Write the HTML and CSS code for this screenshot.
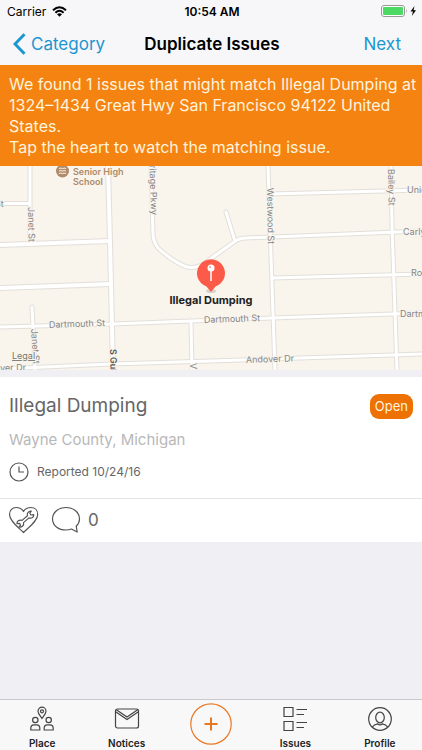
FILE: index.html
```
<!DOCTYPE html>
<html lang="en">
<head>
  <meta charset="UTF-8">
  <meta name="viewport" content="width=device-width, initial-scale=1.0">
  <title>Duplicate Issues</title>
  <link rel="stylesheet" href="styles.css">
</head>
<body>

<header>
  <div class="status-bar">
    <div class="carrier">
      <span>Carrier</span>
      <svg width="15" height="11" viewBox="0 0 15 11" fill="none" stroke="#000" stroke-width="2">
        <path d="M1 4.200Q7.500 -1.800 14 4.200"/>
        <path d="M3.400 6.700Q7.500 2.900 11.600 6.700"/>
        <path d="M7.500 10.800L5 8.200Q7.500 6.200 10 8.200Z" fill="#000" stroke="none"/>
      </svg>
    </div>
    <div class="time">10:54 AM</div>
    <div class="battery">
      <svg width="36" height="12" viewBox="0 0 36 12">
        <rect x="0.500" y="0.500" width="23" height="11" rx="2.500" fill="#fff" stroke="#999"/>
        <rect x="2" y="2" width="20" height="8" rx="1" fill="#4cd964"/>
        <path d="M25 4Q26.500 6 25 8Z" fill="#999"/>
        <path d="M33.500 1L29.500 6.600H32L30.800 11L35 5.200H32.500Z" fill="#000"/>
      </svg>
    </div>
  </div>
  <nav class="nav-bar">
    <a class="back" href="#category">
      <svg width="13" height="22" viewBox="0 0 13 22" fill="none" stroke="#1c96d0" stroke-width="3">
        <path d="M11.500 1.200L2 11L11.500 20.800"/>
      </svg>
      Category
    </a>
    <h1>Duplicate Issues</h1>
    <a class="next" href="#next">Next</a>
  </nav>
</header>

<div class="banner">
  <p>We found 1 issues that might match Illegal Dumping at 1324–1434 Great Hwy San Francisco 94122 United States.</p>
  <p>Tap the heart to watch the matching issue.</p>
</div>

<svg class="map" viewBox="0 0 422 204" preserveAspectRatio="xMidYMid slice">
  <defs>
    <g id="streets">
      <path d="M30 0V72M5 37.500H30M32 141L35 204"/>
      <path d="M151 0L153 68Q153 75 158 82C170 93 178 98 187 101C198 103 205 98 213 91L234 76Q239 72 246 72L422 65"/>
      <path d="M226 46L235 75"/>
      <path d="M268 0L271 90L275 204"/>
      <path d="M391 0L392 60L397 204"/>
      <path d="M270 28L422 24"/>
      <path d="M272 112L422 108"/>
      <path d="M0 161L113 158L272 152L422 147"/>
      <path d="M0 203L111 198L211 195L422 188"/>
      <path d="M191 156L192 204"/>
    </g>
    <g id="avenues">
      <path d="M108 0L110 76L113 204"/>
      <path d="M0 79L110 75"/>
      <path d="M0 122L111 118"/>
    </g>
  </defs>
  <rect width="422" height="204" fill="#f9f5ed"/>
  <use href="#streets" class="road-edge"/>
  <use href="#avenues" class="road-edge wide"/>
  <use href="#streets" class="road"/>
  <use href="#avenues" class="road wide"/>

  <g class="school">
    <circle cx="62.500" cy="5" r="6.500"/>
    <path d="M59 2.500Q61 1.500 62.500 2.700Q64 1.500 66 2.500M59 5Q61 4 62.500 5.200Q64 4 66 5M59 7.500Q61 6.500 62.500 7.700Q64 6.500 66 7.500"/>
    <text x="73" y="9">Senior High</text>
    <text x="73" y="19">School</text>
  </g>

  <g class="labels">
    <text x="-5" y="41">St</text>
    <text transform="translate(28 41) rotate(89)">Janet St</text>
    <text transform="translate(149 -13) rotate(88)">Heritage Pkwy</text>
    <text transform="translate(267 22) rotate(89)">Westwood St</text>
    <text transform="translate(388 3) rotate(89)">Bailey St</text>
    <text x="407" y="27">Union St</text>
    <text x="403" y="69">Carlyle St</text>
    <text x="411" y="110">Rosetta</text>
    <text transform="translate(49 162) rotate(-2)">Dartmouth St</text>
    <text transform="translate(204 157) rotate(-2)">Dartmouth St</text>
    <text x="400" y="151">Dartmouth St</text>
    <text transform="translate(246 197) rotate(-2)">Andover Dr</text>
    <text transform="translate(-22 206) rotate(-2)">Andover Dr</text>
    <text transform="translate(31 163) rotate(86)">Janet St</text>
    <text transform="translate(190 197) rotate(90)">Virgil St</text>
    <text class="major" transform="translate(110 183) rotate(89)">S Gulley Rd</text>
  </g>
  <text class="legal" x="12" y="193">Legal</text>

  <g class="pin">
    <ellipse cx="211" cy="125" rx="5" ry="2" fill="#d8d3cb"/>
    <path d="M211 126L206.500 120.500A14 14 0 1 1 215.500 120.500Z" fill="#fc5b49"/>
    <circle cx="211" cy="102" r="3.500" fill="#fff"/>
    <path d="M211 104V115" stroke="#fff" stroke-width="1.500"/>
    <circle cx="210" cy="101" r="1" fill="#fc9b8f"/>
    <text x="211" y="138">Illegal Dumping</text>
  </g>
</svg>

<main class="card">
  <div class="details">
    <div class="title-row">
      <h2>Illegal Dumping</h2>
      <span class="badge">Open</span>
    </div>
    <p class="place">Wayne County, Michigan</p>
    <p class="reported">
      <svg width="20" height="20" viewBox="0 0 20 20" fill="none" stroke="#555" stroke-width="1.200">
        <circle cx="10" cy="10" r="9"/>
        <path d="M10 4.500V10H15"/>
      </svg>
      Reported 10/24/16
    </p>
  </div>
  <div class="actions">
    <button aria-label="Watch issue">
      <svg width="32" height="28" viewBox="0 0 32 28" fill="none" stroke="#555" stroke-width="1.200" stroke-linejoin="round">
        <path d="M15.500 26.500C10 21 1.500 15 1.500 8.500C1.500 4 4.500 1.500 8.200 1.500C11.500 1.500 14 3 15.500 5.500C17 3 19.500 1.500 22.800 1.500C27 1.500 29.700 4.500 29.700 8.500C29.700 15 21 21 15.500 26.500Z"/>
        <path d="M14 14.400L19.500 9.700C18.500 7.500 20.300 4.900 23.300 5.200L21.800 7.200L22.900 9L25.700 8.600C26 11 23.800 12.900 21 11.900L15.500 16.600C16.300 19.200 14 21.600 11 21L12.600 19.200L11.600 17.300L9 17.700C8.600 15.300 11 13.400 14 14.400Z"/>
      </svg>
    </button>
    <button aria-label="Comments">
      <svg width="30" height="28" viewBox="0 0 30 28" fill="none" stroke="#555" stroke-width="1.200" stroke-linejoin="round">
        <path d="M25.200 20.200C27.500 18 28.500 15.600 28.500 13C28.500 6.500 22.500 1.500 15 1.500S1.500 6.500 1.500 13S7.500 24 15 24C17 24 19 23.600 20.500 23L26.200 26Z"/>
      </svg>
      <span>0</span>
    </button>
  </div>
</main>

<nav class="tab-bar">
  <a href="#place">
    <svg width="26" height="26" viewBox="0 0 26 26" fill="none" stroke="#444" stroke-width="1.200">
      <path d="M13 12.500C11 9.500 9 7.500 9 5.200A4 4 0 0 1 17 5.200C17 7.500 15 9.500 13 12.500Z"/>
      <circle cx="13" cy="5.300" r="1.500"/>
      <circle cx="6.300" cy="14" r="2.700"/>
      <circle cx="19.700" cy="14" r="2.700"/>
      <path d="M1.800 24V22Q1.800 18.800 5 18.800H7.600Q10.800 18.800 10.800 22V24ZM15.200 24V22Q15.200 18.800 18.400 18.800H21Q24.200 18.800 24.200 22V24Z"/>
    </svg>
    Place
  </a>
  <a href="#notices">
    <svg width="26" height="26" viewBox="0 0 26 26" fill="none" stroke="#444" stroke-width="1.200">
      <rect x="1.500" y="3" width="23" height="19" rx="2"/>
      <path d="M2 3.500L13 11L24 3.500M2 6L13 13.500L24 6"/>
    </svg>
    Notices
  </a>
  <a class="add" href="#new" aria-label="New issue">
    <svg width="42" height="42" viewBox="0 0 42 42" fill="none" stroke="#e87722">
      <circle cx="21" cy="21" r="20.200" stroke-width="1.200"/>
      <path d="M14.500 21H27.500M21 14.500V27.500" stroke-width="2"/>
    </svg>
  </a>
  <a href="#issues">
    <svg width="26" height="26" viewBox="0 0 26 26" fill="none" stroke="#444" stroke-width="1.200">
      <path d="M2 1.500H11V10.500H2ZM2 15.500H11V24.500H2Z"/>
      <path d="M14.500 3.500H25M14.500 8.500H22M14.500 16.500H25M14.500 21.500H22"/>
    </svg>
    Issues
  </a>
  <a href="#profile">
    <svg width="26" height="26" viewBox="0 0 26 26" fill="none" stroke="#444" stroke-width="1.200">
      <circle cx="13" cy="13" r="11.300"/>
      <ellipse cx="13" cy="11.500" rx="4.300" ry="5.300"/>
      <path d="M5.300 21Q7 18.500 10.500 17.800Q13 20 15.500 17.800Q19 18.500 20.700 21"/>
    </svg>
    Profile
  </a>
</nav>

</body>
</html>
```
FILE: styles.css
```
* {
  box-sizing: border-box;
}
body {
  margin: 0;
  min-height: 100vh;
  display: flex;
  flex-direction: column;
  font-family: Inter, "Liberation Sans", sans-serif;
  background-color: #efeff4;
  color: #000;
}
h1, h2, p {
  margin: 0;
  font-weight: normal;
}
a {
  text-decoration: none;
  color: #1c96d0;
}
svg {
  display: block;
  flex-shrink: 0;
}

/* Top bars */
header {
  background-color: #f7f7f9;
}
.status-bar {
  display: grid;
  grid-template-columns: 1fr auto 1fr;
  align-items: center;
  height: 22px;
  padding: 0 5px 0 7px;
  font-size: 12px;
}
.carrier {
  display: flex;
  align-items: center;
  gap: 6px;
}
.time {
  font-weight: 600;
}
.battery {
  justify-self: end;
}
.nav-bar {
  display: grid;
  grid-template-columns: 1fr auto 1fr;
  align-items: center;
  height: 43px;
  padding: 0 21px 0 13px;
  font-size: 17px;
}
.nav-bar h1 {
  padding-left: 10px;
  font-size: 17px;
  font-weight: 600;
}
.back {
  display: flex;
  align-items: center;
  gap: 5px;
}
.next {
  justify-self: end;
}

.banner {
  padding: 9px 2px 8px 9px;
  background-color: #f58311;
  color: #fff3dc;
  font-size: 16px;
  line-height: 21px;
}

/* Map */
.map {
  width: 100%;
  height: auto;
}
.road-edge {
  fill: none;
  stroke: #e2dfda;
  stroke-width: 5px;
  stroke-linecap: round;
}
.road {
  fill: none;
  stroke: #fff;
  stroke-width: 3px;
  stroke-linecap: round;
}
.road-edge.wide {
  stroke-width: 6px;
}
.road.wide {
  stroke-width: 4px;
}
.map text {
  paint-order: stroke;
  stroke: #f9f5ed;
  stroke-width: 2px;
}
.labels {
  font-size: 9px;
  fill: #85858a;
}
.labels .major {
  font-weight: 600;
  fill: #555;
}
.school {
  font-size: 9px;
  font-weight: 600;
  fill: #b08a69;
}
.school path {
  fill: none;
  stroke: #f9f5ed;
  stroke-width: 1px;
}
.legal {
  font-size: 9px;
  fill: #77756f;
  text-decoration: underline;
}
.pin text {
  font-size: 11px;
  font-weight: 700;
  text-anchor: middle;
  fill: #222;
}

/* Issue card */
.card {
  margin-top: 7px;
  background-color: #fff;
}
.details {
  padding: 16px 9px 16px;
}
.title-row {
  display: flex;
  align-items: center;
  justify-content: space-between;
}
.title-row h2 {
  font-size: 19px;
  line-height: 26px;
  color: #666;
}
.badge {
  padding: 0 5px;
  border-radius: 9px;
  background-color: #ee7203;
  color: #fff3dc;
  font-size: 13px;
  line-height: 25px;
}
.place {
  margin-top: 11px;
  font-size: 15px;
  line-height: 20px;
  color: #b8b8b8;
}
.reported {
  display: flex;
  align-items: center;
  gap: 8px;
  margin-top: 12px;
  font-size: 12px;
  line-height: 20px;
  color: #666;
}
.actions {
  display: flex;
  gap: 11px;
  padding: 7px 8px 8px;
  border-top: 1px solid #e4e4e4;
}
.actions button {
  display: flex;
  align-items: center;
  gap: 7px;
  padding: 0;
  border: none;
  background: none;
  font-family: inherit;
  font-size: 17px;
  color: #666;
  cursor: pointer;
}

/* Bottom tabs */
.tab-bar {
  display: flex;
  margin-top: auto;
  border-top: 1px solid #c8c8d0;
  background-color: #f8f8f9;
}
.tab-bar a {
  flex: 1;
  display: flex;
  flex-direction: column;
  align-items: center;
  gap: 4px;
  padding-top: 6px;
  font-size: 10px;
  font-weight: 600;
  line-height: 14px;
  color: #222;
}
.tab-bar .add {
  padding: 3px 0 5px;
}
```
